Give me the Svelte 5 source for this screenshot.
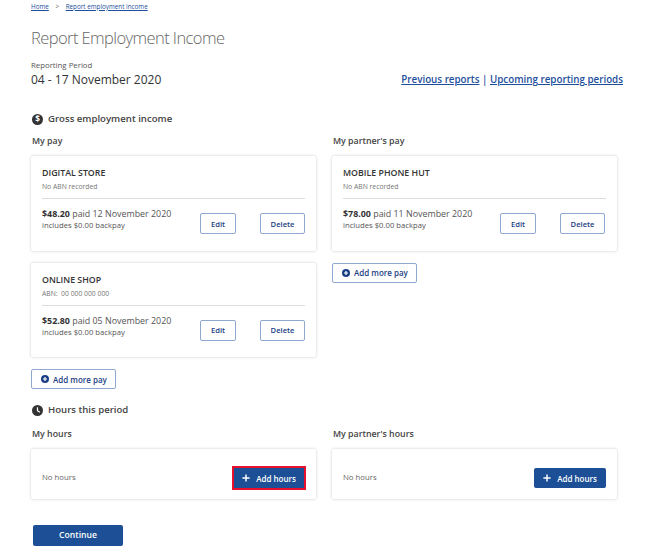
<script>
  const myPay = [
    { name: "DIGITAL STORE", abn: "No ABN recorded", amount: "$48.20", paid: "12 November 2020" },
    { name: "ONLINE SHOP", abn: "ABN:\u00a0 00 000 000 000", amount: "$52.80", paid: "05 November 2020" }
  ]
  const partnerPay = [
    { name: "MOBILE PHONE HUT", abn: "No ABN recorded", amount: "$78.00", paid: "11 November 2020" }
  ]
  const payColumns = [
    { title: "My pay", items: myPay },
    { title: "My partner's pay", items: partnerPay }
  ]
  const hourColumns = [
    { title: "My hours", focused: true },
    { title: "My partner's hours", focused: false }
  ]
</script>

<div class="page">
  <nav class="crumbs">
    <a href="#home">Home</a>
    <span class="sep">&gt;</span>
    <a href="#report">Report employment income</a>
  </nav>

  <h1>Report Employment Income</h1>

  <div class="period">
    <div>
      <div class="period-label">Reporting Period</div>
      <div class="period-value">04 - 17 November 2020</div>
    </div>
    <div class="links">
      <a href="#previous">Previous reports</a> | <a href="#upcoming">Upcoming reporting periods</a>
    </div>
  </div>

  <h2 class="section-title">
    <svg viewBox="0 0 12 12" width="11" height="11">
      <circle cx="6" cy="6" r="6" fill="#333" />
      <text x="6" y="9.2" text-anchor="middle" class="dollar">$</text>
    </svg>
    Gross employment income
  </h2>

  <div class="columns">
    {#each payColumns as col}
      <section class="pay-col">
        <h3>{col.title}</h3>
        {#each col.items as item}
          <div class="card">
            <div class="employer">{item.name}</div>
            <div class="abn">{item.abn}</div>
            <div class="pay-row">
              <div class="pay-text">
                <div class="pay-line"><b>{item.amount}</b> paid {item.paid}</div>
                <div class="backpay">includes $0.00 backpay</div>
              </div>
              <button class="btn-outline edit">Edit</button>
              <button class="btn-outline delete">Delete</button>
            </div>
          </div>
        {/each}
        <button class="btn-outline add-pay">
          <svg viewBox="0 0 12 12" width="8" height="8">
            <circle cx="6" cy="6" r="6" fill="#1c3f85" />
            <path d="M6 3v6M3 6h6" stroke="#fff" stroke-width="1.8" />
          </svg>
          Add more pay
        </button>
      </section>
    {/each}
  </div>

  <h2 class="section-title hours-title">
    <svg viewBox="0 0 12 12" width="11" height="11">
      <circle cx="6" cy="6" r="6" fill="#333" />
      <path d="M6 2.5V6.3L8.6 8" stroke="#fff" stroke-width="1.3" fill="none" />
    </svg>
    Hours this period
  </h2>

  <div class="columns">
    {#each hourColumns as col}
      <section>
        <h3>{col.title}</h3>
        <div class="card hours-card">
          <span class="no-hours">No hours</span>
          <button class="btn-solid add-hours" class:focused={col.focused}>
            <svg viewBox="0 0 10 10" width="8" height="8">
              <path d="M5 .5v9M.5 5h9" stroke="#fff" stroke-width="1.8" />
            </svg>
            Add hours
          </button>
        </div>
      </section>
    {/each}
  </div>

  <button class="btn-solid continue">Continue</button>
</div>

<style>
  :global(body) {
    margin: 0;
    background: #fff;
  }

  .page {
    width: 650px;
    height: 556px;
    box-sizing: border-box;
    padding: 3px 0 0 31px;
    overflow: hidden;
    font-family: "Open Sans", "Noto Sans", sans-serif;
    color: #333;
  }

  a {
    color: #1d4f9c;
  }

  .crumbs {
    font-size: 6.3px;
    line-height: 8px;
    height: 8px;
  }

  .crumbs .sep {
    margin: 0 5px;
    color: #666;
  }

  h1 {
    margin: 17px 0 0;
    font-size: 16.5px;
    line-height: 20px;
    font-weight: 300;
    letter-spacing: -0.58px;
    color: #666;
  }

  .period {
    display: flex;
    justify-content: space-between;
    align-items: flex-end;
    width: 592px;
    margin-top: 12px;
  }

  .period-label {
    font-size: 7.8px;
    line-height: 11px;
    color: #555;
  }

  .period-value {
    font-size: 12px;
    line-height: 16px;
    margin-top: 1px;
  }

  .links {
    font-size: 9.8px;
    line-height: 16px;
    font-weight: 600;
    color: #1d4f9c;
  }

  .section-title {
    display: flex;
    align-items: center;
    gap: 5px;
    margin: 24px 0 0 1px;
    font-size: 9.6px;
    line-height: 14px;
    font-weight: 600;
    color: #444;
  }

  .dollar {
    font-size: 9px;
    font-weight: 700;
    fill: #fff;
  }

  .hours-title {
    margin-top: 14px;
    margin-bottom: 2px;
  }

  .columns {
    display: grid;
    grid-template-columns: 285px 285px;
    column-gap: 16px;
  }

  h3 {
    margin: 9px 0 8px 1px;
    font-size: 8.8px;
    line-height: 13px;
    font-weight: 600;
    color: #444;
  }

  .card {
    box-sizing: border-box;
    width: 285px;
    height: 94.5px;
    margin-bottom: 12px;
    padding: 11px 11px 0;
    background: #fff;
    border-radius: 2px;
    box-shadow: 0 0 3px rgba(0, 0, 0, 0.22);
  }

  .employer {
    font-size: 8.8px;
    line-height: 13px;
    font-weight: 600;
    color: #333;
  }

  .abn {
    margin-top: 2px;
    font-size: 6.8px;
    line-height: 10px;
    color: #777;
  }

  .pay-row {
    display: flex;
    align-items: flex-start;
    margin-top: 6px;
    padding-top: 9px;
    border-top: 1px solid #ddd;
  }

  .pay-text {
    flex: 1;
  }

  .pay-line {
    font-size: 8.9px;
    line-height: 12px;
    color: #555;
  }

  .pay-line b {
    font-weight: 700;
    color: #333;
  }

  .backpay {
    font-size: 7.7px;
    line-height: 10px;
    color: #555;
  }

  button {
    font-family: inherit;
    cursor: pointer;
  }

  .btn-outline {
    box-sizing: border-box;
    height: 21px;
    padding: 0;
    background: #fff;
    border: 1px solid #8ea8d0;
    border-radius: 2px;
    font-size: 7.6px;
    font-weight: 600;
    color: #1c3f85;
  }

  .edit {
    width: 36px;
    margin: 5px 24px 0 0;
  }

  .delete {
    width: 45px;
    margin-top: 5px;
  }

  .pay-col:last-child .delete {
    margin-right: 1px;
  }

  .add-pay {
    display: flex;
    align-items: center;
    gap: 4px;
    width: 85px;
    height: 20px;
    margin-top: 1px;
    padding-left: 9px;
    font-size: 8px;
  }

  .hours-card {
    display: flex;
    justify-content: space-between;
    align-items: center;
    height: 50px;
    margin-bottom: 0;
    padding: 6px 11px 0;
  }

  .no-hours {
    font-size: 7.8px;
    color: #666;
  }

  .btn-solid {
    background: #1c4f96;
    border: none;
    border-radius: 2px;
    color: #fff;
    font-size: 8px;
    font-weight: 600;
  }

  .add-hours {
    display: flex;
    align-items: center;
    justify-content: center;
    gap: 6px;
    width: 72px;
    height: 20px;
    margin-top: 2px;
    padding: 0;
  }

  .add-hours.focused {
    width: 70px;
    margin-right: 1px;
    border-radius: 0;
    outline: 2px solid #e8112d;
  }

  .continue {
    display: block;
    width: 90px;
    height: 20.5px;
    margin: 26px 0 0 2px;
    padding: 0;
    font-size: 8.6px;
  }
</style>
